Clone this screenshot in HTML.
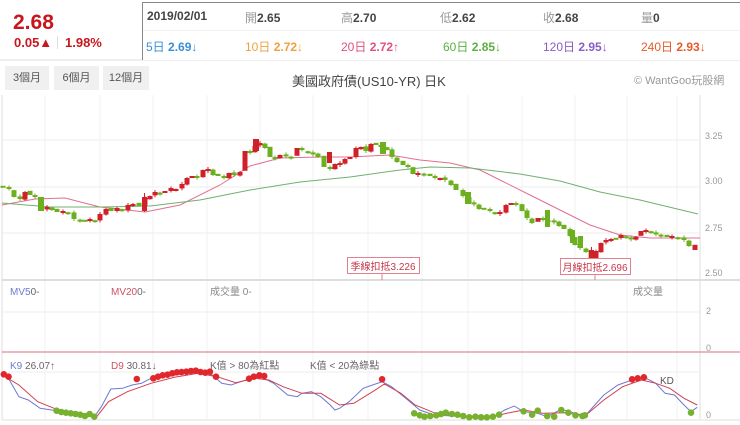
<!DOCTYPE html>
<html><head><meta charset="utf-8"><style>
*{margin:0;padding:0;box-sizing:border-box}
body{width:740px;height:425px;overflow:hidden;background:#fff;font-family:"Liberation Sans","Noto Sans CJK TC",sans-serif;position:relative}
.a{position:absolute;white-space:nowrap}
.g{color:#999}
.b{font-weight:bold}
.btn{position:absolute;top:66px;height:24px;background:#f0f0f0;font-size:11px;color:#555;line-height:24px;text-align:center}
</style></head><body>
<div class="a" style="left:0;top:0;width:142px;height:60px;background:#fff;border-bottom:1px solid #eee"></div>
<div class="a" style="left:142px;top:2px;width:598px;height:1px;background:#888"></div>
<div class="a" style="left:142px;top:2px;width:1px;height:58px;background:#888"></div>
<div class="a" style="left:143px;top:30px;width:597px;height:1px;background:#f2f2f2"></div>
<div class="a" style="left:0;top:60px;width:740px;height:1px;background:#eee"></div>
<div class="a b" style="left:13px;top:11px;font-size:21px;color:#c8161d">2.68</div>
<div class="a b" style="left:14px;top:35px;font-size:13px;color:#c8161d">0.05▲</div>
<div class="a" style="left:57px;top:36px;width:1px;height:13px;background:#ddd"></div>
<div class="a b" style="left:65px;top:35px;font-size:13px;color:#c8161d">1.98%</div>
<div class="a b" style="left:147px;top:9px;font-size:12px;color:#444">2019/02/01</div>
<div class="a" style="left:245px;top:9px;font-size:12px;color:#444"><span class="g">開</span><b>2.65</b></div>
<div class="a" style="left:341px;top:9px;font-size:12px;color:#444"><span class="g">高</span><b>2.70</b></div>
<div class="a" style="left:440px;top:9px;font-size:12px;color:#444"><span class="g">低</span><b>2.62</b></div>
<div class="a" style="left:543px;top:9px;font-size:12px;color:#444"><span class="g">收</span><b>2.68</b></div>
<div class="a" style="left:641px;top:9px;font-size:12px;color:#444"><span class="g">量</span><b>0</b></div>
<div class="a" style="left:146px;top:38px;font-size:12px;color:#3a8ed8">5日 <b>2.69</b>↓</div>
<div class="a" style="left:245px;top:38px;font-size:12px;color:#f0a040">10日 <b>2.72</b>↓</div>
<div class="a" style="left:341px;top:38px;font-size:12px;color:#e0507a">20日 <b>2.72</b>↑</div>
<div class="a" style="left:443px;top:38px;font-size:12px;color:#5cb040">60日 <b>2.85</b>↓</div>
<div class="a" style="left:543px;top:38px;font-size:12px;color:#8a5cc8">120日 <b>2.95</b>↓</div>
<div class="a" style="left:641px;top:38px;font-size:12px;color:#e85a2a">240日 <b>2.93</b>↓</div>
<div class="btn" style="left:5px;width:44px">3個月</div>
<div class="btn" style="left:54px;width:45px">6個月</div>
<div class="btn" style="left:103px;width:46px">12個月</div>
<div class="a" style="left:292px;top:71px;font-size:13px;color:#444">美國政府債(US10-YR) 日K</div>
<div class="a" style="left:634px;top:72px;font-size:11px;color:#999">© WantGoo玩股網</div>
<svg class="a" style="left:0;top:0" width="740" height="425" id="s"></svg>
<script>
var s=document.getElementById('s'),h='';
function L(x1,y1,x2,y2,c,w){h+='<line x1="'+x1+'" y1="'+y1+'" x2="'+x2+'" y2="'+y2+'" stroke="'+c+'" stroke-width="'+(w||1)+'"/>';}
function R(x,y,w,hh,c){h+='<rect x="'+x+'" y="'+y+'" width="'+w+'" height="'+hh+'" fill="'+c+'"/>';}
function T(x,y,t,c,sz,an){h+='<text x="'+x+'" y="'+y+'" fill="'+c+'" font-size="'+(sz||10)+'" text-anchor="'+(an||'start')+'">'+t+'</text>';}
function P(pts,c){h+='<polyline fill="none" stroke="'+c+'" stroke-width="1" points="'+pts.map(function(p){return p[0]+','+p[1]}).join(' ')+'"/>';}
L(2,95,2,420,'#ddd');L(700,95,700,420,'#ddd');
var gx=[45,100,153,207,260,313,368,422,468,522,575,627,677];
gx.forEach(function(x){L(x,95,x,420,'#f1f1f1');});
[140,187,233].forEach(function(y){L(2,y,700,y,'#eee');});
L(2,280,740,280,'#ddd',2);L(2,312,700,312,'#eee');L(2,352,740,352,'#e0a0a8',1.5);L(2,372,700,372,'#eee');L(2,420,740,420,'#eee',2);
T(705,139,'3.25','#999',9);T(705,184,'3.00','#999',9);T(705,231,'2.75','#999',9);T(705,276,'2.50','#999',9);
T(706,314,'2','#999',9);T(706,351,'0','#999',9);T(706,418,'0','#999',9);
P([[2,205],[35,199],[65,198],[100,207],[145,212],[180,205],[220,185],[250,166],[280,158],[320,157],[350,157],[390,155],[420,160],[450,163],[480,170],[500,180],[530,195],[560,210],[590,225],[620,235],[650,238],[700,238]],'#e07090');
P([[2,203],[50,207],[100,207],[150,206],[200,200],[250,190],[300,182],[350,177],[400,170],[430,167],[470,168],[520,174],[560,181],[600,192],[640,200],[698,214]],'#70b070');
var c=[[3,187],[9,189],[14,197],[20,199],[25,192],[30,195],[35,197],[41,210],[47,207],[52,210],[57,212],[63,211],[68,213],[74,219],[80,221],[85,220],[90,219],[95,221],[100,214],[106,209],[111,211],[117,208],[122,211],[128,205],[133,204],[139,206],[145,198],[150,196],[155,192],[160,193],[165,191],[171,188],[176,189],[182,184],[187,178],[192,176],[197,176],[203,170],[208,169],[213,175],[218,176],[224,177],[229,173],[234,175],[240,172],[245,151],[250,151],[255,146],[260,143],[265,148],[270,157],[275,157],[280,155],[286,156],[291,157],[297,148],[302,150],[308,153],[313,153],[318,157],[324,167],[330,168],[335,164],[340,163],[345,159],[350,157],[356,148],[361,147],[366,151],[371,144],[376,145],[381,146],[387,150],[392,157],[397,162],[403,165],[408,166],[413,174],[418,173],[424,175],[430,176],[435,177],[440,178],[445,180],[451,185],[456,190],[463,196],[469,203],[474,204],[479,209],[484,209],[490,211],[495,213],[500,212],[506,205],[511,203],[516,203],[522,211],[527,218],[532,223],[538,218],[543,219],[548,221],[554,221],[559,226],[564,229],[570,236],[575,245],[580,248],[586,252],[591,267],[596,251],[601,243],[606,240],[611,239],[616,238],[621,235],[626,238],[631,239],[636,237],[641,231],[646,230],[651,233],[656,234],[661,236],[667,237],[672,236],[678,238],[684,240],[689,246],[695,250]];
var prev=c[0][1];
c.forEach(function(p,i){var x=p[0],y=p[1],o=prev+((i*7)%5-2)*0.6;var top=Math.min(o,y),bot=Math.max(o,y);if(bot-top<2){bot=top+2;}
var col=y<o?'#d0202a':'#6cb020';if(i==c.length-1)col='#d0202a';
var wk=((i*13)%5)/2;if(wk>0)L(x,top-wk,x,bot+wk,col);R(x-2.5,top,5,bot-top,col);prev=y;});
R(142,197,5,14,'#d0202a');L(144.5,193,144.5,212,'#d0202a');R(589,250,5,18,'#d0202a');L(591.5,247,591.5,272,'#d0202a');
R(38,197,6,14,'#6cb020');R(465,192,6,12,'#6cb020');R(545,210,5,17,'#6cb020');R(380,142,6,12,'#6cb020');R(570,230,5,13,'#6cb020');R(578,236,5,12,'#6cb020');R(253,139,6,12,'#d0202a');R(327,152,5,11,'#d0202a');
h+='<rect x="347.5" y="257.5" width="72" height="16" fill="#fff" stroke="#e08090"/>';T(383,270,'季線扣抵3.226','#c8364a',10,'middle');L(382,274,382,280,'#e08090');
h+='<rect x="560.5" y="258.5" width="70" height="16" fill="#fff" stroke="#e08090"/>';T(595,271,'月線扣抵2.696','#c8364a',10,'middle');L(595,275,595,280,'#e08090');
h+='<text x="10" y="295" font-size="10"><tspan fill="#6a7ad0">MV5</tspan><tspan fill="#666">0-</tspan></text>';
h+='<text x="111" y="295" font-size="10"><tspan fill="#d05060">MV20</tspan><tspan fill="#666">0-</tspan></text>';
T(210,295,'成交量 0-','#888',10);T(633,295,'成交量','#888',10);
h+='<text x="10" y="369" font-size="10"><tspan fill="#6a7ad0">K9</tspan><tspan fill="#666"> 26.07↑</tspan></text>';
h+='<text x="111" y="369" font-size="10"><tspan fill="#d05060">D9</tspan><tspan fill="#666"> 30.81↓</tspan></text>';
T(210,369,'K值 &gt; 80為紅點','#666',10);T(310,369,'K值 &lt; 20為綠點','#666',10);T(660,384,'KD','#555',10);
function cv(a){return a.map(function(p){return [(p[0]/2.12).toFixed(1),(270+p[1]/3).toFixed(1)]});}
var K=[[5,310],[20,330],[40,380],[60,390],[85,415],[120,422],[160,430],[200,440],[215,410],[235,357],[260,355],[280,345],[300,340],[320,325],[360,318],[420,303],[450,315],[470,340],[490,345],[510,335],[550,318],[580,340],[610,375],[630,380],[640,370],[660,365],[680,380],[700,405],[710,420],[720,415],[740,395],[770,355],[790,345],[810,335],[830,350],[860,385],[890,420],[920,435],[960,438],[1000,440],[1050,438],[1070,420],[1090,408],[1110,425],[1140,430],[1160,440],[1190,418],[1220,430],[1240,438],[1280,375],[1310,345],[1340,330],[1370,325],[1390,340],[1410,370],[1430,375],[1450,405],[1465,425],[1478,412]];
var D=[[5,315],[40,345],[80,395],[120,418],[170,432],[205,440],[230,395],[270,365],[320,340],[370,322],[420,310],[460,320],[500,338],[540,325],[570,330],[600,350],[640,370],[680,370],[720,405],[750,400],[790,365],[815,342],[850,370],[880,405],[920,428],[970,438],[1050,438],[1080,428],[1110,420],[1150,430],[1200,428],[1240,438],[1280,390],[1320,350],[1360,330],[1390,340],[1420,355],[1450,385],[1478,405]];
P(cv(K),'#6a7ad0');P(cv(D),'#d04050');
function dot(x,y,col){h+='<circle cx="'+(x/2.12).toFixed(1)+'" cy="'+(270+y/3).toFixed(1)+'" r="3.3" fill="'+col+'"/>';}
[[8,313],[18,320],[290,327],[325,325],[335,320],[345,316],[355,314],[365,310],[375,307],[385,306],[395,305],[405,303],[415,302],[425,306],[435,308],[445,305],[458,320],[528,326],[538,320],[550,316],[560,318],[810,328],[1340,328],[1352,325],[1365,322]].forEach(function(p){dot(p[0],p[1],'#e0282c');});
[[120,422],[130,426],[140,428],[150,430],[160,432],[170,434],[180,438],[190,432],[200,440],[878,430],[890,436],[900,440],[912,438],[925,436],[935,432],[945,428],[958,432],[970,434],[982,438],[995,442],[1008,440],[1020,442],[1032,442],[1045,440],[1058,434],[1110,424],[1128,434],[1140,422],[1160,438],[1175,440],[1190,420],[1205,428],[1220,436],[1235,438],[1240,436],[1465,428]].forEach(function(p){dot(p[0],p[1],'#78b030');});
s.innerHTML=h;
</script>
</body></html>
